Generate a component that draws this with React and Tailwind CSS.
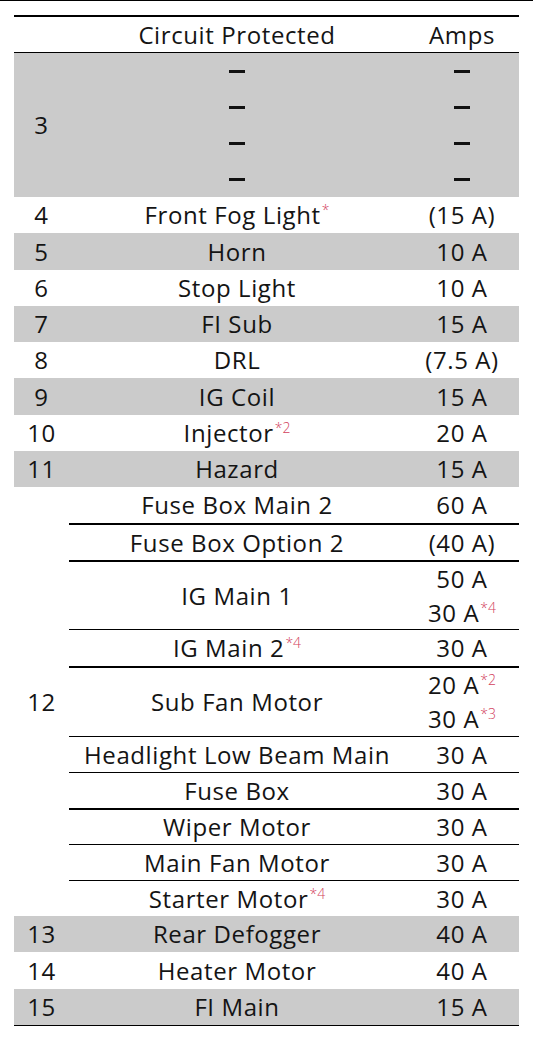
const font = { fontFamily: "'Open Sans', 'Noto Sans', sans-serif" };

function Sup({ children }) {
  return (
    <sup className="relative top-0 ml-[1px] text-[14px] tracking-normal font-light text-[#d2415c] align-super leading-none">
      {children}
    </sup>
  );
}

const simple = [
  { n: "4", c: <>Front Fog Light<Sup>*</Sup></>, a: "(15 A)", gray: false, h: "h-[36px]" },
  { n: "5", c: "Horn", a: "10 A", gray: true, h: "h-[37px]" },
  { n: "6", c: "Stop Light", a: "10 A", gray: false, h: "h-[36px]" },
  { n: "7", c: "FI Sub", a: "15 A", gray: true, h: "h-[36px]" },
  { n: "8", c: "DRL", a: "(7.5 A)", gray: false, h: "h-[36px]" },
  { n: "9", c: "IG Coil", a: "15 A", gray: true, h: "h-[37px]" },
  { n: "10", c: <>Injector<Sup>*2</Sup></>, a: "20 A", gray: false, h: "h-[36px]" },
  { n: "11", c: "Hazard", a: "15 A", gray: true, h: "h-[36px]" },
];

const sub = [
  { c: "Fuse Box Main 2", a: ["60 A"], h: "h-[36px]", b: "" },
  { c: "Fuse Box Option 2", a: ["(40 A)"], h: "h-[37px]", b: "border-t-2" },
  { c: "IG Main 1", a: ["50 A", <>30 A<Sup>*4</Sup></>], h: "h-[69px]", b: "border-t-2" },
  { c: <>IG Main 2<Sup>*4</Sup></>, a: ["30 A"], h: "h-[37px]", b: "border-t" },
  { c: "Sub Fan Motor", a: [<>20 A<Sup>*2</Sup></>, <>30 A<Sup>*3</Sup></>], h: "h-[70px]", b: "border-t-2" },
  { c: "Headlight Low Beam Main", a: ["30 A"], h: "h-[36px]", b: "border-t" },
  { c: "Fuse Box", a: ["30 A"], h: "h-[36px]", b: "border-t" },
  { c: "Wiper Motor", a: ["30 A"], h: "h-[36px]", b: "border-t-2" },
  { c: "Main Fan Motor", a: ["30 A"], h: "h-[36px]", b: "border-t" },
  { c: <>Starter Motor<Sup>*4</Sup></>, a: ["30 A"], h: "h-[36px]", b: "border-t" },
];

const tail = [
  { n: "13", c: "Rear Defogger", a: "40 A", gray: true, h: "h-[36px]" },
  { n: "14", c: "Heater Motor", a: "40 A", gray: false, h: "h-[37px]" },
  { n: "15", c: "FI Main", a: "15 A", gray: true, h: "h-[36px]" },
];

function Dash() {
  return (
    <div className="h-[36px] flex items-center justify-center">
      <div className="w-[16px] h-[3px] bg-[#111]" />
    </div>
  );
}

function Row({ r }) {
  return (
    <div className={`flex items-center ${r.h} ${r.gray ? "bg-[#cbcbcb]" : ""}`}>
      <div className="w-[55px] text-center">{r.n}</div>
      <div className="w-[336px] text-center">{r.c}</div>
      <div className="flex-1 text-center">{r.a}</div>
    </div>
  );
}

export default function App() {
  return (
    <div className="min-h-[1044px] bg-white border-t border-black" style={font}>
      <div className="pt-[14px] px-[14px] pb-4">
        <div className="w-[505px] border-t-2 border-black text-[24px] tracking-[0.6px] leading-[34px] text-[#141414]">
          <div className="flex items-center h-[36px] border-b border-black">
            <div className="w-[55px]" />
            <div className="w-[336px] text-center">Circuit Protected</div>
            <div className="flex-1 text-center">Amps</div>
          </div>

          <div className="flex bg-[#cbcbcb] h-[144px]">
            <div className="w-[55px] flex items-center justify-center">3</div>
            <div className="w-[336px] flex flex-col">
              {[0, 1, 2, 3].map((i) => (
                <Dash key={i} />
              ))}
            </div>
            <div className="flex-1 flex flex-col">
              {[0, 1, 2, 3].map((i) => (
                <Dash key={i} />
              ))}
            </div>
          </div>

          {simple.map((r) => (
            <Row key={r.n} r={r} />
          ))}

          <div className="flex">
            <div className="w-[55px] flex items-center justify-center">12</div>
            <div className="flex-1 flex flex-col">
              {sub.map((s, i) => (
                <div key={i} className={`flex items-center border-black ${s.h} ${s.b}`}>
                  <div className="w-[336px] text-center">{s.c}</div>
                  <div className="flex-1 flex flex-col items-center">
                    {s.a.map((a, j) => (
                      <div key={j}>{a}</div>
                    ))}
                  </div>
                </div>
              ))}
            </div>
          </div>

          {tail.map((r) => (
            <Row key={r.n} r={r} />
          ))}
          <div className="border-t border-black" />
        </div>
      </div>
    </div>
  );
}
